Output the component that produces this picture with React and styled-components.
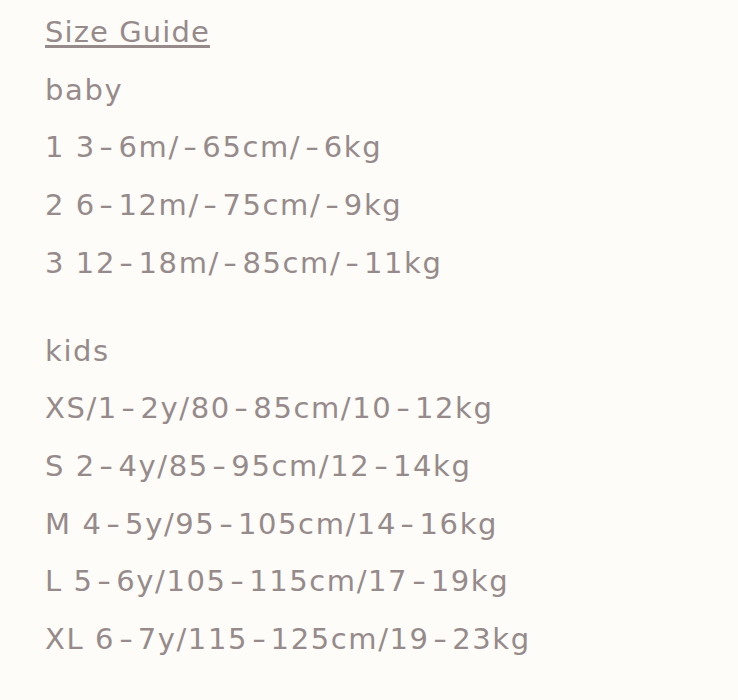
import React from "react";
import styled, { createGlobalStyle } from "styled-components";

const Global = createGlobalStyle`
  html, body { margin: 0; padding: 0; background: #fdfcf9; }
`;

const Page = styled.div`
  padding: 4px 45px 0;
  font-family: "DejaVu Sans", "Noto Sans", sans-serif;
  font-size: 29px;
  line-height: 57.7px;
  letter-spacing: 1.6px;
  color: #968b8a;
`;

const Title = styled.a`
  display: block;
  color: inherit;
  letter-spacing: 1.1px;
  text-decoration: underline;
  text-decoration-thickness: 3px;
  text-underline-offset: 3px;
`;

const Group = styled.div`
  & + & { margin-top: 30px; }
`;

const Line = styled.div``;

const Dash = styled.span`
  display: inline-block;
  margin: 0 5px 0 5.5px;
  transform: scaleX(1.35);
`;

const groups = [
  { name: "baby", rows: ["1 3-6m/-65cm/-6kg", "2 6-12m/-75cm/-9kg", "3 12-18m/-85cm/-11kg"] },
  { name: "kids", rows: ["XS/1-2y/80-85cm/10-12kg", "S 2-4y/85-95cm/12-14kg", "M 4-5y/95-105cm/14-16kg", "L 5-6y/105-115cm/17-19kg", "XL 6-7y/115-125cm/19-23kg"] },
];

function Row({ text }) {
  const parts = text.split("-");
  return (
    <Line>
      {parts.map((p, i) => (
        <React.Fragment key={i}>
          {i > 0 && <Dash>-</Dash>}
          {p}
        </React.Fragment>
      ))}
    </Line>
  );
}

export default function App() {
  return (
    <>
      <Global />
      <Page>
        <Title>Size Guide</Title>
        {groups.map((g) => (
          <Group key={g.name}>
            <Line>{g.name}</Line>
            {g.rows.map((r) => <Row key={r} text={r} />)}
          </Group>
        ))}
      </Page>
    </>
  );
}
